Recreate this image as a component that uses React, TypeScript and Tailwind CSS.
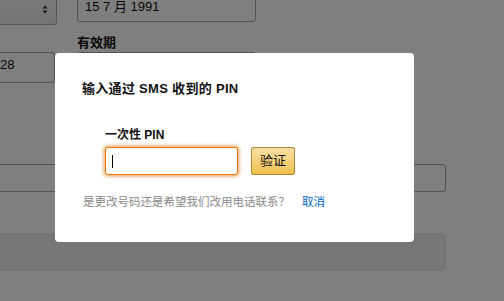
import { useState } from 'react'

const font = { fontFamily: '"Liberation Sans", Arial, "Noto Sans CJK SC", sans-serif' }

function SelectArrows() {
  return (
    <svg width="6" height="9" viewBox="0 0 6 9" className="text-[#333]">
      <path d="M3 0.5 L5.5 3.5 H0.5 Z" fill="currentColor" />
      <path d="M3 8.5 L5.5 5.5 H0.5 Z" fill="currentColor" />
    </svg>
  )
}

export default function App() {
  const [pin, setPin] = useState('')

  return (
    <div className="relative w-[504px] h-[301px] overflow-hidden bg-white text-[#111]" style={font}>
      {/* page behind the dialog */}
      <div className="-mt-[10px]">
        <div className="flex items-start gap-[20px]">
          <div className="-ml-[20px] w-[77px] h-[35px] flex items-end justify-end pr-[8px] pb-[10px] border border-[#adb1b8] rounded-[3px] bg-gradient-to-b from-[#f7f8fa] to-[#e7e9ec]">
            <SelectArrows />
          </div>
          <div className="w-[179px] h-[32px] flex items-end pl-[7px] pb-[5px] border border-[#a6a6a6] rounded-[3px] text-[13px] leading-[18px]">
            15 7 月 1991
          </div>
        </div>
        <div className="mt-[9px] pl-[77px] text-[13px] leading-[18px] font-bold">有效期</div>
        <div className="flex items-start gap-[22px]">
          <div className="-ml-[60px] w-[115px] h-[31px] flex items-center pl-[59px] pb-[6px] border border-[#a6a6a6] rounded-[3px] text-[13px]">28</div>
          <div className="w-[179px] h-[31px] border border-[#a6a6a6] rounded-[3px]" />
        </div>
        <div className="mt-[81px] -ml-[20px] w-[466px] h-[28px] border border-[#a6a6a6] rounded-[3px]" />
        <div className="mt-[42px] -ml-[20px] w-[466px] h-[36px] border border-[#dddddd] rounded-[4px] bg-[#eeeeee]" />
      </div>

      {/* overlay */}
      <div className="absolute inset-0 bg-black/50" />

      {/* dialog */}
      <div className="absolute left-[55px] top-[53px] w-[359px] h-[189px] bg-white rounded-[4px] pt-[26px] pl-[27px]">
        <h2 className="text-[13px] leading-[20px] font-bold tracking-[0.3px]">输入通过 SMS 收到的 PIN</h2>
        <div className="pl-[23px] mt-[27px]">
          <label className="block text-[12px] leading-[18px] font-bold">一次性 PIN</label>
          <div className="mt-[3px] flex items-center gap-[13px]">
            <div className="relative w-[133px] h-[28px] border border-[#e77600] rounded-[3px] shadow-[0_0_3px_2px_rgba(228,121,17,0.5)] bg-white">
              <input
                value={pin}
                onChange={(e) => setPin(e.target.value)}
                className="w-full h-full px-[7px] text-[13px] outline-none bg-transparent"
              />
              <span className="absolute left-[6px] top-[7px] w-px h-[13px] bg-black" />
            </div>
            <button className="w-[44px] h-[28px] border border-[#a88734] border-b-[#9c7e31] rounded-[3px] bg-gradient-to-b from-[#f7dfa5] to-[#f0c14b] text-[13px] leading-[18px] text-[#111]">
              验证
            </button>
          </div>
        </div>
        <p className="mt-[18px] ml-[1px] text-[11.5px] leading-[18px] text-[#888]">
          是更改号码还是希望我们改用电话联系？
          <a href="#" className="ml-[12px] text-[#0066c0]">取消</a>
        </p>
      </div>
    </div>
  )
}
